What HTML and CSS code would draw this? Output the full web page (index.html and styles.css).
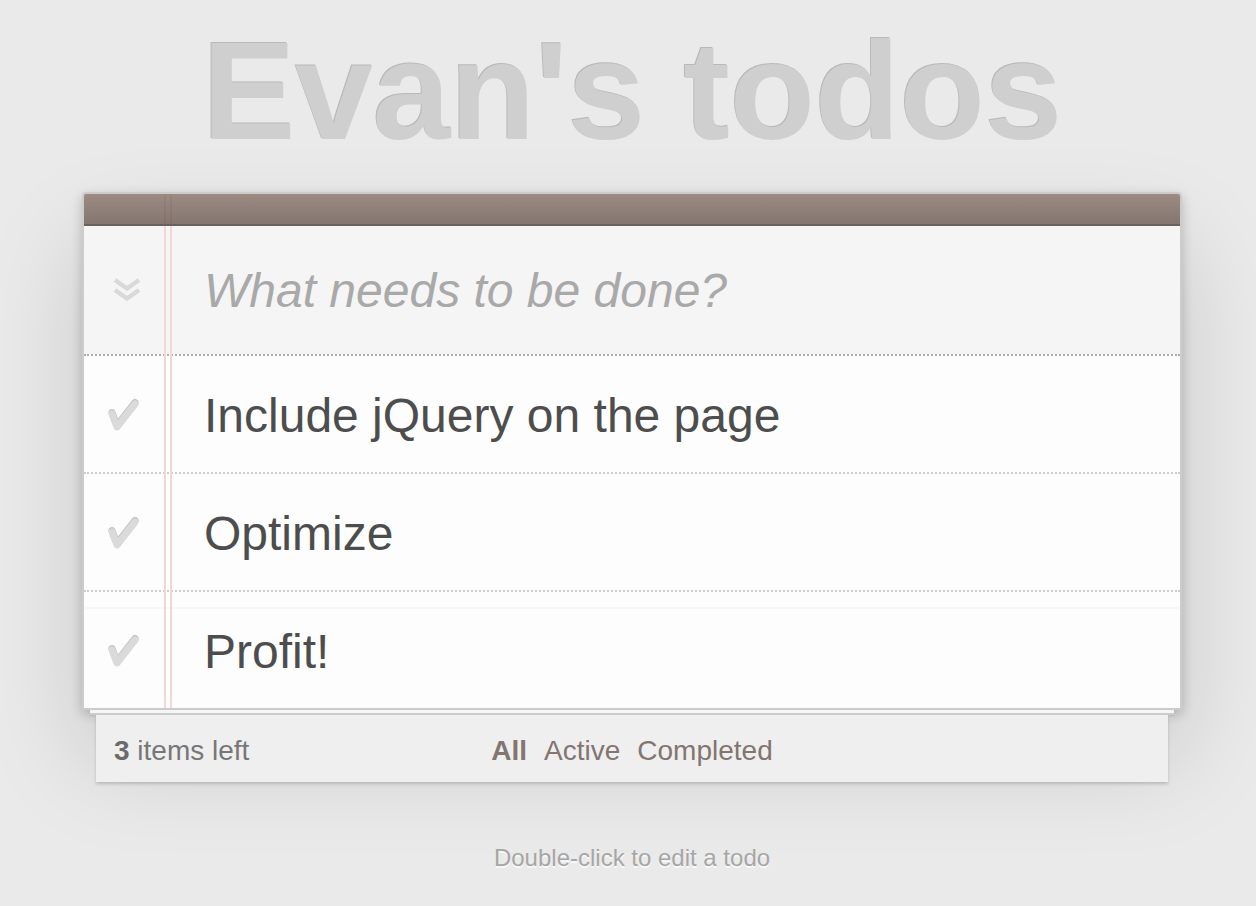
FILE: index.html
```html
<!DOCTYPE html>
<html lang="en">
<head>
<meta charset="utf-8">
<title>Evan's todos</title>
<link rel="stylesheet" href="styles.css">
</head>
<body>
<div class="page">
  <h1 class="title">Evan's todos</h1>
  <section class="app">
    <div class="header-bar"></div>
    <div class="new-todo">
      <span class="toggle-all">
        <svg width="28" height="26" viewBox="0 0 28 26"><path d="M2 4 L14 12.5 L26 4 M2 14 L14 22.5 L26 14" fill="none" stroke="#d9d9d9" stroke-width="4.5"/></svg>
      </span>
      <span class="placeholder">What needs to be done?</span>
    </div>
    <ul class="list">
      <li class="item">
        <span class="check"><svg width="40" height="38" viewBox="0 0 40 38"><path d="M8 19 L13 32 L31 9" fill="none" stroke="#c4c4c4" stroke-width="7" stroke-linecap="round" stroke-linejoin="round" transform="translate(0 -1.5)"/><path d="M8 19 L13 32 L31 9" fill="none" stroke="#dadada" stroke-width="7" stroke-linecap="round" stroke-linejoin="round"/></svg></span>
        <span class="label">Include jQuery on the page</span>
      </li>
      <li class="item">
        <span class="check"><svg width="40" height="38" viewBox="0 0 40 38"><path d="M8 19 L13 32 L31 9" fill="none" stroke="#c4c4c4" stroke-width="7" stroke-linecap="round" stroke-linejoin="round" transform="translate(0 -1.5)"/><path d="M8 19 L13 32 L31 9" fill="none" stroke="#dadada" stroke-width="7" stroke-linecap="round" stroke-linejoin="round"/></svg></span>
        <span class="label">Optimize</span>
      </li>
      <li class="item">
        <span class="check"><svg width="40" height="38" viewBox="0 0 40 38"><path d="M8 19 L13 32 L31 9" fill="none" stroke="#c4c4c4" stroke-width="7" stroke-linecap="round" stroke-linejoin="round" transform="translate(0 -1.5)"/><path d="M8 19 L13 32 L31 9" fill="none" stroke="#dadada" stroke-width="7" stroke-linecap="round" stroke-linejoin="round"/></svg></span>
        <span class="label">Profit!</span>
      </li>
    </ul>
  </section>
  <div class="strip"></div>
  <footer class="footer">
    <span class="count"><strong>3</strong> items left</span>
    <nav class="filters">
      <a class="filter selected">All</a>
      <a class="filter">Active</a>
      <a class="filter">Completed</a>
    </nav>
    <span></span>
  </footer>
  <p class="info">Double-click to edit a todo</p>
</div>
</body>
</html>
```

FILE: styles.css
```css
html, body {
  margin: 0;
  padding: 0;
}

body {
  background: #eaeaea;
  font-family: "Liberation Sans", Arial, Helvetica, sans-serif;
  color: #4d4d4d;
}

.page {
  width: 1100px;
  margin-left: 82px;
  padding-top: 21px;
}

.title {
  margin: 0;
  font-size: 140px;
  line-height: 140px;
  font-weight: bold;
  text-align: center;
  color: #cfcfcf;
  text-shadow: -1px -1px 0 #b9b9b9;
  letter-spacing: -0.5px;
}

.app {
  position: relative;
  margin-top: 31px;
  border: 2px solid #ccc;
  border-radius: 4px 4px 0 0;
  background: rgba(255, 255, 255, 0.9);
  box-shadow: 0 4px 12px 0 rgba(0, 0, 0, 0.2), 0 50px 100px 0 rgba(0, 0, 0, 0.15);
}

.app::before {
  content: "";
  position: absolute;
  top: 0;
  bottom: 0;
  left: 80px;
  width: 2px;
  border-left: 2px solid #f5d6d6;
  border-right: 2px solid #f5d6d6;
  padding: 0 1px;
}

.header-bar {
  position: relative;
  z-index: 1;
  height: 30px;
  border-bottom: 2px solid #6c615c;
  border-radius: 2px 2px 0 0;
  background: linear-gradient(to bottom, rgba(132, 110, 100, 0.8), rgba(101, 84, 76, 0.8));
}

.new-todo {
  display: flex;
  align-items: center;
  height: 128px;
  background: rgba(0, 0, 0, 0.03);
}

.toggle-all {
  width: 80px;
  display: flex;
  justify-content: center;
  padding-left: 6px;
  box-sizing: border-box;
  margin-top: -3px;
}

.toggle-all svg {
  display: block;
}

.placeholder {
  margin-left: 40px;
  font-size: 48px;
  font-style: italic;
  color: #a9a9a9;
}

.list {
  margin: 0;
  padding: 0;
  list-style: none;
  border-top: 2px dotted #adadad;
}

.item {
  display: flex;
  align-items: center;
  border-bottom: 2px dotted #ccc;
}

.item:last-child {
  border-bottom: none;
  background: linear-gradient(to bottom, transparent 15px, rgba(0, 0, 0, 0.025) 15px, rgba(0, 0, 0, 0.025) 17px, transparent 17px);
}

.check {
  width: 80px;
  display: flex;
  justify-content: center;
}

.check svg {
  display: block;
}

.label {
  margin-left: 40px;
  padding: 32px 0 28px;
  font-size: 48px;
  line-height: 56px;
  color: #4d4d4d;
  white-space: pre;
}

.strip {
  position: relative;
  margin: 0 8px;
  height: 3px;
  background: #f6f6f6;
  border-bottom: 2px solid #cdcdcd;
  box-shadow: 0 1px 2px rgba(0, 0, 0, 0.08);
}

.footer {
  position: relative;
  margin: 0 14px;
  height: 67px;
  box-sizing: border-box;
  padding: 16px 18px 0;
  display: grid;
  grid-template-columns: 1fr auto 1fr;
  align-items: start;
  background: #efefef;
  box-shadow: 0 2px 3px rgba(0, 0, 0, 0.18);
  font-size: 28px;
  line-height: 40px;
}

.count {
  color: #777;
}

.count strong {
  color: #6b6b6b;
}

.filters {
  display: flex;
  gap: 17px;
}

.filter {
  color: #83756f;
}

.filter.selected {
  font-weight: bold;
}

.info {
  margin: 59px 0 0;
  text-align: center;
  font-size: 24px;
  line-height: 34px;
  color: #a6a6a6;
  text-shadow: 0 2px 0 rgba(255, 255, 255, 0.7);
}
```
